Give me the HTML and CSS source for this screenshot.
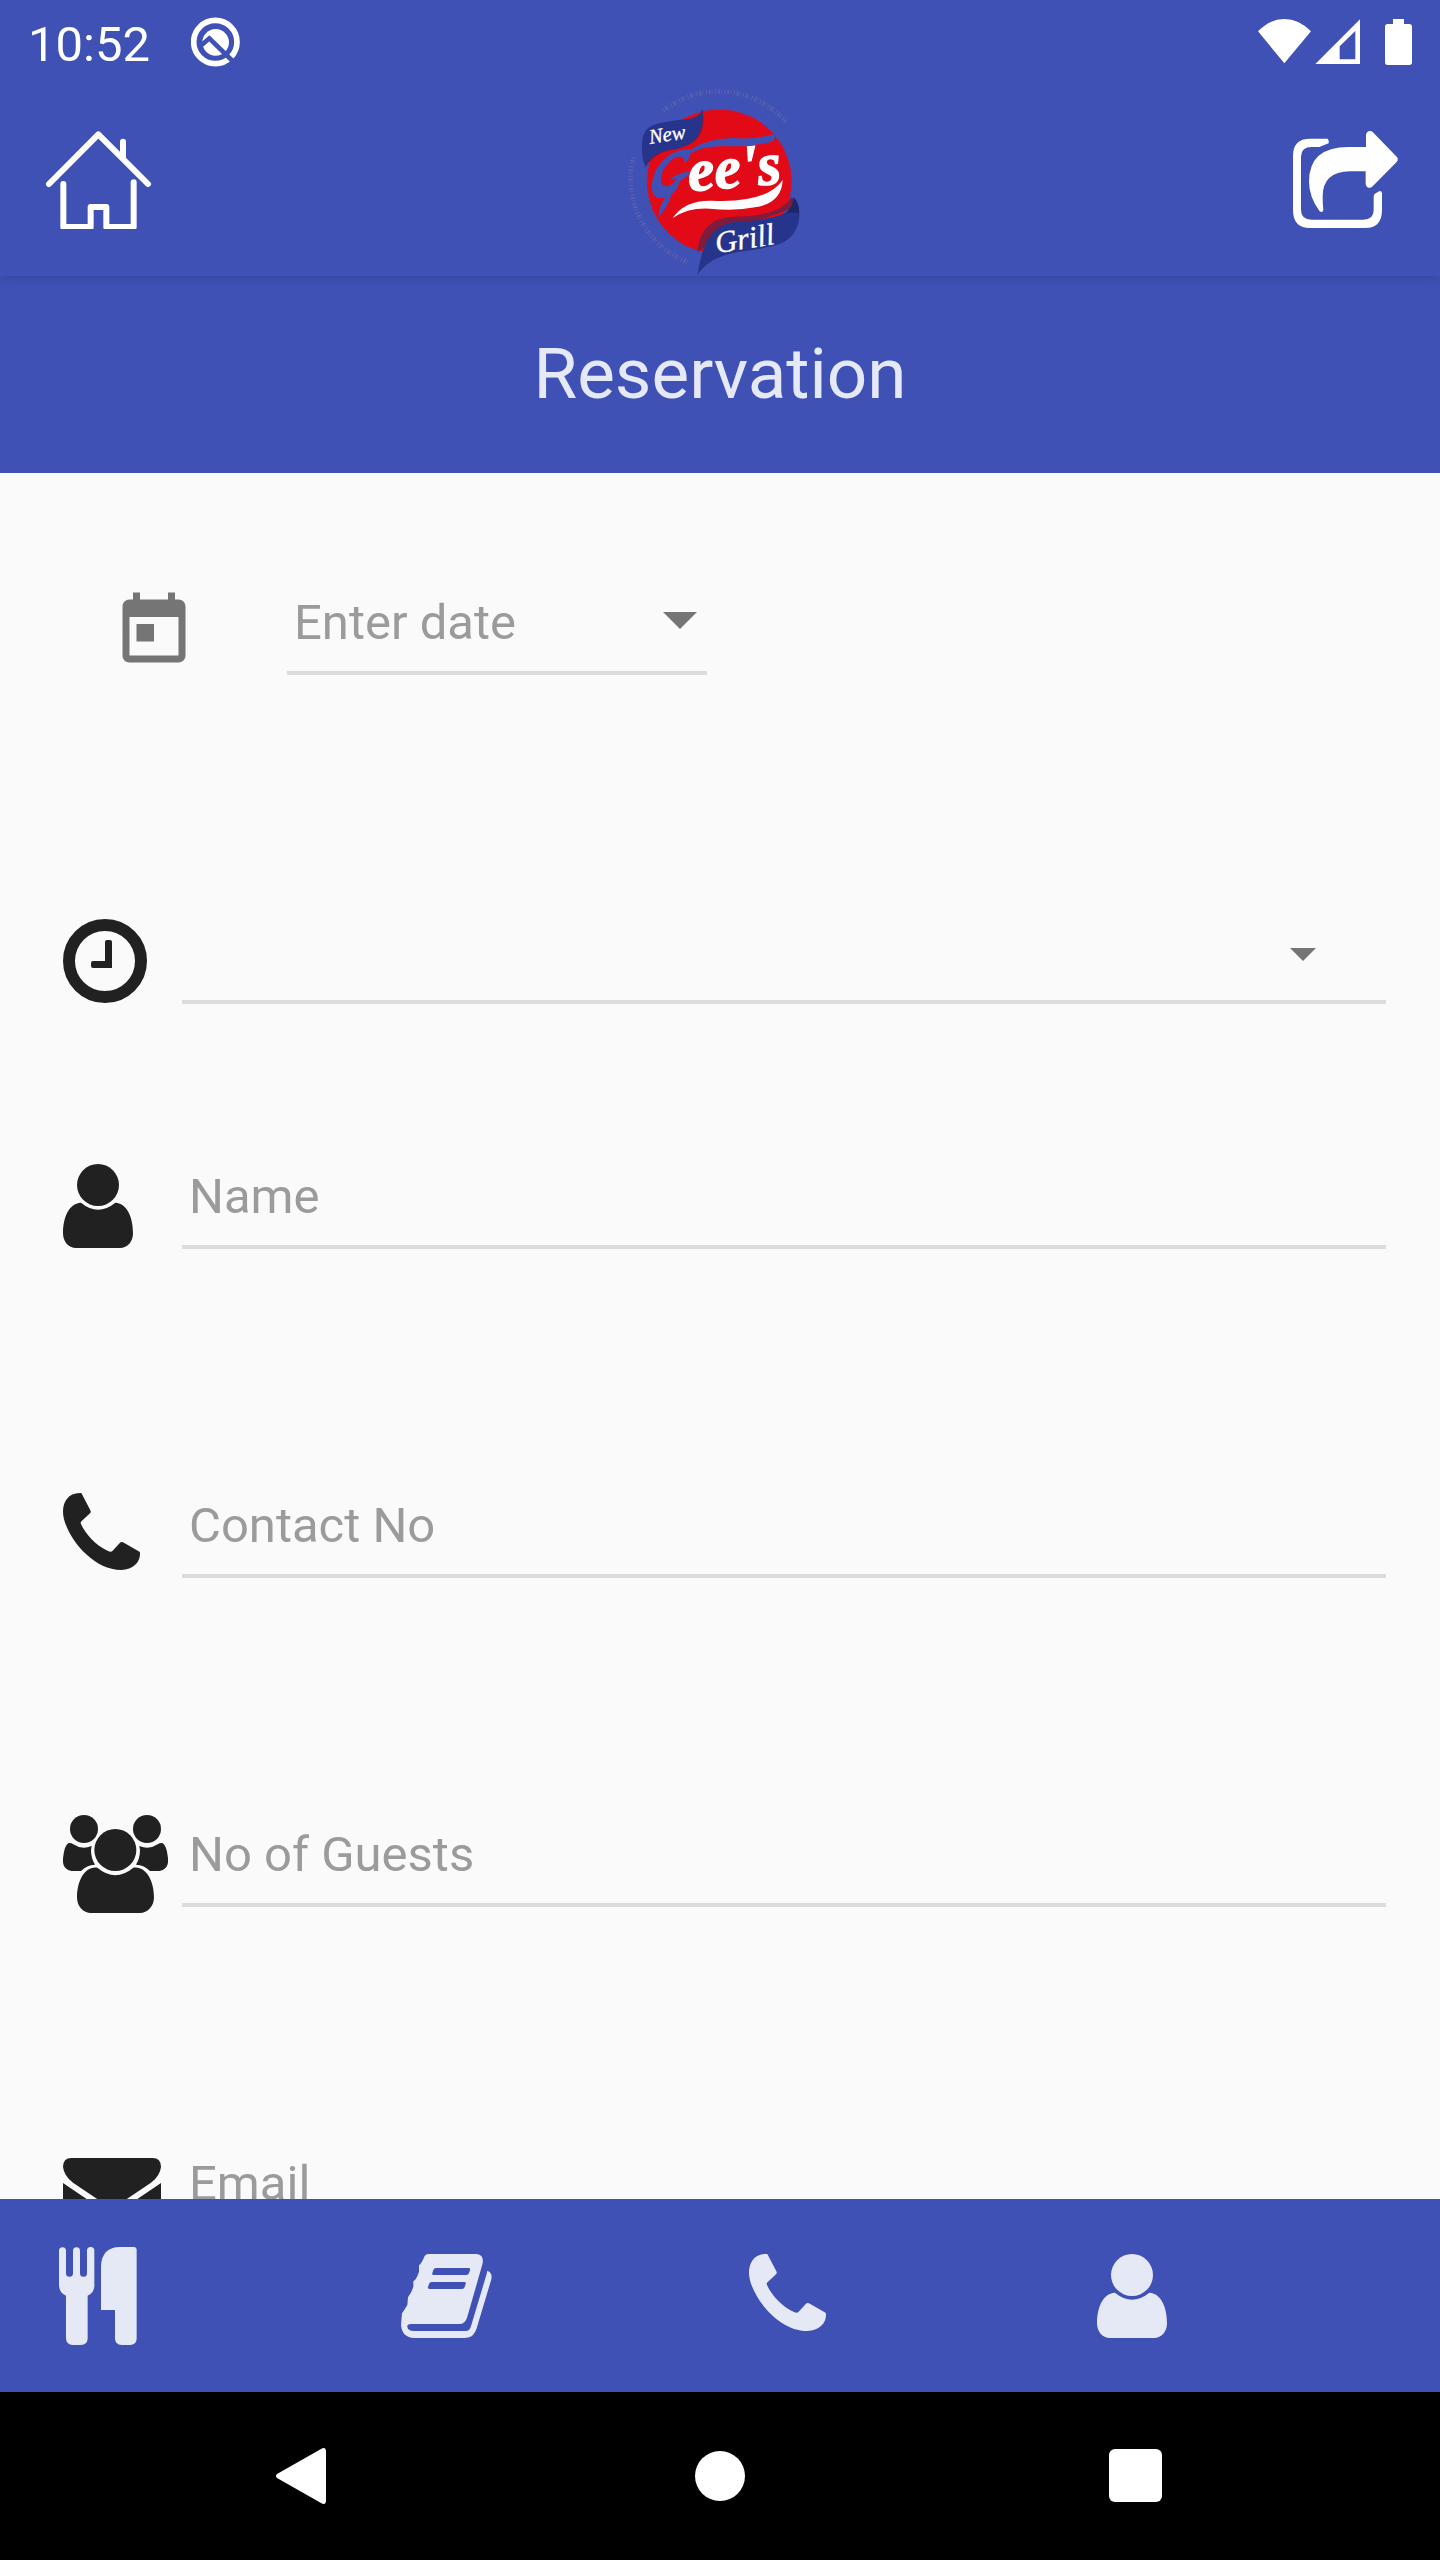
FILE: index.html
```html
<!DOCTYPE html>
<html lang="en">
<head>
  <meta charset="UTF-8">
  <meta name="viewport" content="width=device-width, initial-scale=1.0">
  <title>Reservation</title>
  <link rel="stylesheet" href="styles.css">
</head>
<body>
  <!-- icons used more than once -->
  <svg class="sprite" aria-hidden="true">
    <symbol id="icon-user" viewBox="69 801 336 294">
      <circle cx="174" cy="885" r="63"/>
      <path d="M123 938C85 940 69 985 69 1030C69 1055 85 1074 108 1074H240C263 1074 279 1055 279 1030C279 985 263 940 226 938Q174 980 123 938z"/>
    </symbol>
    <symbol id="icon-phone" viewBox="69 48 336 294">
      <path d="M122 69C85 68 69 95 69 125C69 185 150 300 244 300C280 300 302 275 300 248Q299 245 296 244L249 217Q244 214 240 218L218 242Q213 248 204 243C165 225 135 190 122 160Q121 156 126 152L150 130Q154 127 151 121L126 73Q125 69 122 69z"/>
    </symbol>
  </svg>

  <header class="app-header">
    <div class="status-bar">
      <span class="time">10:52</span>
      <svg class="status-app" viewBox="573 51 150 162" aria-hidden="true">
        <circle cx="646" cy="126" r="65" fill="none" stroke="#fff" stroke-width="17"/>
        <circle cx="647" cy="127" r="40" fill="#fff"/>
        <path d="M598 141L628 115L704 189" fill="none" stroke="#3f51b5" stroke-width="14"/>
      </svg>
      <svg class="status-icons" viewBox="168 51 468 162" aria-hidden="true">
        <path d="M174 94Q210 57 253 57Q297 57 333 94L253 190z"/>
        <path fill-rule="evenodd" d="M480 58V192H346zM466 93L419 139V178H466z"/>
        <path d="M579 57h33v15h16q8 0 8 8v107q0 8-8 8h-65q-8 0-8-8V80q0-8 8-8h16z"/>
      </svg>
    </div>
    <div class="toolbar">
      <button class="icon-btn" type="button" aria-label="Home">
        <svg class="icon line" viewBox="126 393 336 294">
          <path d="M147 552L295 403L444 552M369 425V475M190 552V681H272V621H319V681H401V547"/>
        </svg>
      </button>
      <svg class="logo" viewBox="75 42 570 576" role="img" aria-label="New Gee's Grill">
        <path class="logo-ring" d="M190 122A268 268 0 0 1 558 156M100 262A268 268 0 0 0 268 578"/>
        <circle cx="358" cy="335" r="215" fill="#e30a17"/>
        <circle cx="358" cy="335" r="215" fill="none" stroke="#e30a17" stroke-width="5" stroke-dasharray="7 5"/>
        <path fill="#7d1c3c" d="M308 122Q325 215 235 234Q165 244 135 294L150 250Q290 220 308 122zM292 545Q300 445 400 440Q540 440 575 380L590 410L420 470z"/>
        <path fill="#26348b" d="M308 116Q300 142 262 148Q200 152 158 166Q130 178 126 215Q123 265 137 292Q146 254 200 242Q270 232 292 200Q312 168 308 116z"/>
        <path fill="#26348b" d="M580 382Q600 400 598 440Q592 505 530 525Q480 538 420 545Q325 560 292 616Q300 560 320 515Q350 462 405 456Q490 452 545 434Q580 420 580 382z"/>
        <path fill="#1d2768" d="M580 382Q600 400 596 430Q575 425 556 430Q580 412 580 382z"/>
        <path fill="#3f51b5" d="M530 190L520 214Q455 232 375 228Q310 228 272 250Q268 270 254 278Q252 252 226 262Q188 285 183 325Q182 352 205 348Q222 342 230 325Q212 328 208 332Q220 312 272 303Q265 320 240 332Q232 360 215 372Q205 410 175 442Q176 410 196 382Q155 392 155 348Q160 290 205 258Q235 235 275 238Q320 206 395 204Q470 210 530 190z"/>
        <path fill="#fff" d="M218 444Q255 390 335 392Q500 400 548 330Q545 400 465 412Q405 424 330 416Q265 412 218 444z"/>
        <text class="logo-name" x="268" y="364" transform="rotate(-5 268 364)">ee's</text>
        <text class="logo-word" x="150" y="222" transform="rotate(-9 150 222)">New</text>
        <text class="logo-word big" x="350" y="550" transform="rotate(-9 350 550)">Grill</text>
      </svg>
      <button class="icon-btn" type="button" aria-label="Share">
        <svg class="icon" viewBox="258 393 336 294">
          <path d="M383 416Q388 422 386 430L358 441H335Q303 441 303 470V630Q303 659 335 659H490Q521 659 521 630V590Q521 583 527 580L539 573Q546 573 546 580V630Q546 684 495 684H330Q279 684 279 630V468Q279 416 330 416z"/>
          <path d="M498 441V405Q500 393 510 393Q515 393 518 396L590 470Q597 478 590 486L518 559Q512 565 505 563Q497 560 497 550V514H450Q368 515 368 590Q368 612 370 630Q368 640 359 634Q327 590 327 545Q327 441 445 441z"/>
        </svg>
      </button>
    </div>
  </header>

  <h1 class="page-title">Reservation</h1>

  <main class="content">
    <form class="form">
      <div class="row date-row">
        <label class="row-icon" for="date">
          <svg class="icon" viewBox="0 0 112 98" role="img" aria-label="Date">
            <path transform="translate(0 6) scale(3.5)" d="M19 3h-1V1h-2v2H8V1H6v2H5c-1.11 0-1.99.9-1.99 2L3 19c0 1.1.89 2 2 2h14c1.1 0 2-.9 2-2V5c0-1.1-.9-2-2-2zm0 16H5V8h14v11zM7 10h5v5H7z"/>
          </svg>
        </label>
        <div class="field date-field">
          <select id="date">
            <option>Enter date</option>
          </select>
        </div>
      </div>

      <div class="row time-row">
        <label class="row-icon" for="time">
          <svg class="icon" viewBox="69 66 336 294" role="img" aria-label="Time">
            <circle cx="195" cy="213" r="108" fill="none" stroke="currentColor" stroke-width="36"/>
            <path d="M201 150h9q6 0 6 6v78h-57q-6 0-6-6v-9q0-6 6-6h36v-57q0-6 6-6z"/>
          </svg>
        </label>
        <div class="field time-field">
          <select id="time">
            <option></option>
          </select>
        </div>
      </div>

      <div class="row">
        <label class="row-icon" for="name">
          <svg class="icon" role="img" aria-label="Name"><use href="#icon-user"/></svg>
        </label>
        <div class="field">
          <input type="text" id="name" placeholder="Name">
        </div>
      </div>

      <div class="row">
        <label class="row-icon" for="contact">
          <svg class="icon" role="img" aria-label="Contact No"><use href="#icon-phone"/></svg>
        </label>
        <div class="field">
          <input type="tel" id="contact" placeholder="Contact No">
        </div>
      </div>

      <div class="row">
        <label class="row-icon" for="guests">
          <svg class="icon" viewBox="69 75 336 294" role="img" aria-label="No of Guests">
            <circle cx="132" cy="117" r="42"/>
            <circle cx="321" cy="117" r="42"/>
            <circle cx="226" cy="180" r="63"/>
            <path id="guest-side" d="M86 159Q73 165 69 205V215C69 232 83 243 102 243H123Q140 225 165 224Q153 205 153 180L155 168Q125 180 100 163Q93 158 86 159z"/>
            <use href="#guest-side" transform="matrix(-1 0 0 1 453 0)"/>
            <path d="M172 233Q226 278 280 233C320 228 342 275 342 322C342 350 322 369 300 369H153C130 369 111 350 111 322C111 275 133 228 172 233z"/>
          </svg>
        </label>
        <div class="field">
          <input type="text" id="guests" placeholder="No of Guests">
        </div>
      </div>

      <div class="row">
        <label class="row-icon" for="email">
          <svg class="icon" viewBox="69 42 336 294" role="img" aria-label="Email">
            <path d="M94 84H338Q363 84 363 111Q360 138 333 158L250 214Q216 236 182 214L99 158Q72 138 69 111Q69 84 94 84z"/>
            <path d="M69 159L190 241Q216 256 242 241L363 159V290Q363 315 338 315H94Q69 315 69 290z"/>
          </svg>
        </label>
        <div class="field">
          <input type="email" id="email" placeholder="Email">
        </div>
      </div>
    </form>
  </main>

  <nav class="tab-bar">
    <button type="button" aria-label="Menu">
      <svg class="icon" viewBox="39 351 336 294">
        <path d="M57 362a10.500 10.500 0 0 1 21 0V430a10.500 10.500 0 0 0 21 0V362a10.500 10.500 0 0 1 21 0V430a10.500 10.500 0 0 0 21 0V362a11 11 0 0 1 22 0V465Q164 488 143 497V625Q143 645 122 645H99Q78 645 78 625V497Q57 488 57 465z"/>
        <path d="M240 351H281Q290 351 290 360V625Q290 645 270 645H245Q225 645 225 625V540H183V408Q186 351 240 351z"/>
      </svg>
    </button>
    <button type="button" aria-label="Reservation">
      <svg class="icon" viewBox="63 81 336 294">
        <path fill-rule="evenodd" d="M148 102H290Q312 104 308 130L262 290Q256 312 238 312H95Q81 312 82 320Q84 333 102 333H258Q268 333 272 322L319 165L322 152Q338 158 334 178L290 325Q282 354 255 354H102Q66 352 63 315L66 280Q72 272 82 255L84 232Q96 215 100 200V184Q110 178 117 155V136Q125 130 134 108Q138 101 148 102zM168 144H266Q272 144 270 150L267 159Q265 165 259 165H161Q155 165 157 159L160 150Q162 144 168 144zM155 186H253Q259 186 257 192L254 201Q252 207 246 207H148Q142 207 144 201L147 192Q149 186 155 186z"/>
      </svg>
    </button>
    <button type="button" aria-label="Contact">
      <svg class="icon"><use href="#icon-phone"/></svg>
    </button>
    <button type="button" aria-label="Account">
      <svg class="icon"><use href="#icon-user"/></svg>
    </button>
  </nav>

  <div class="system-nav">
    <button type="button" aria-label="Back">
      <svg viewBox="0 0 60 60"><path d="M2 28Q0 30 2 32L46 57Q51 60 51 54V6Q51 0 46 3z"/></svg>
    </button>
    <button type="button" aria-label="Home screen">
      <svg viewBox="0 0 60 60"><circle cx="30" cy="30" r="25"/></svg>
    </button>
    <button type="button" aria-label="Recent apps">
      <svg viewBox="0 0 60 60"><rect x="4" y="3" width="53" height="53" rx="6"/></svg>
    </button>
  </div>
</body>
</html>
```
FILE: styles.css
```css
* {
  box-sizing: border-box;
}
body {
  margin: 0;
  height: 100vh;
  display: flex;
  flex-direction: column;
  background: #fafafa;
  font-family: Roboto, sans-serif;
  font-size: 49px;
}
button {
  padding: 0;
  border: none;
  background: none;
  color: inherit;
  cursor: pointer;
}
svg {
  display: block;
  fill: currentColor;
}
.sprite {
  position: absolute;
  width: 0;
  height: 0;
}
.icon {
  width: 112px;
  height: 98px;
}
.icon.line {
  fill: none;
  stroke: currentColor;
  stroke-width: 18;
  stroke-linecap: round;
  stroke-linejoin: round;
}

/* header */
.app-header {
  position: relative;
  z-index: 1;
  background: #3f51b5;
  color: #fff;
  box-shadow: 0 3px 10px rgba(0, 0, 0, 0.12);
}
.status-bar {
  display: flex;
  align-items: center;
  height: 84px;
  padding: 4px 28px 0;
}
.status-app {
  width: 50px;
  height: 54px;
  margin-left: 41px;
}
.status-icons {
  width: 156px;
  height: 54px;
  margin-left: auto;
}
.toolbar {
  display: flex;
  align-items: center;
  justify-content: space-between;
  height: 192px;
  padding: 0 42px;
}
.logo {
  width: 190px;
  height: 192px;
}
.logo-ring {
  fill: none;
  stroke: #5c62ac;
  stroke-width: 14;
  stroke-dasharray: 3 6 5 4 2 8;
}
.logo-name {
  fill: #fff;
  stroke: #fff;
  stroke-width: 4;
  font: italic bold 180px "Liberation Serif", serif;
}
.logo-word {
  fill: #fff;
  stroke: #fff;
  stroke-width: 1;
  font: italic 62px "Liberation Serif", serif;
}
.logo-word.big {
  font-size: 92px;
}

.page-title {
  margin: 0;
  padding: 57px 0 58px;
  background: #3f51b5;
  color: #e5e8f5;
  font-size: 71px;
  font-weight: 400;
  line-height: 82px;
  text-align: center;
}

/* form */
.content {
  flex: 1;
  min-height: 0;
  overflow-y: auto;
  scrollbar-width: none;
}
.form {
  padding: 110px 54px 110px 63px;
}
.row {
  display: flex;
  align-items: flex-start;
  gap: 7px;
  margin-bottom: 231px;
  color: #212121;
}
.time-row {
  margin-bottom: 147px;
}
.date-row {
  padding-left: 49px;
  gap: 63px;
  color: #757575;
}
.field {
  position: relative;
  flex: 1;
}
.date-field {
  flex: none;
  width: 420px;
}
.field input,
.field select {
  display: block;
  width: 100%;
  height: 92px;
  padding: 0 7px 9px;
  border: none;
  border-bottom: 4px solid #dcdcdc;
  border-radius: 0;
  background: transparent;
  color: #9b9b9b;
  font: inherit;
  appearance: none;
  outline: none;
}
.field input::placeholder {
  color: #9b9b9b;
  opacity: 1;
}
/* drop-down arrows */
.date-field::after,
.time-field::after {
  content: "";
  position: absolute;
  border-style: solid;
  border-color: #757575 transparent transparent;
  pointer-events: none;
}
.date-field::after {
  top: 29px;
  right: 10px;
  border-width: 17px 17px 0;
}
.time-field::after {
  top: 36px;
  right: 70px;
  border-width: 13px 13px 0;
}

/* bottom bars */
.tab-bar {
  display: flex;
  align-items: center;
  height: 193px;
  padding-left: 48px;
  background: #3f51b5;
  color: #e5e8f5;
}
.tab-bar button {
  flex: 1;
  padding-left: 5px;
}
.system-nav {
  display: flex;
  align-items: center;
  height: 168px;
  padding: 0 97px;
  background: #000;
  color: #fff;
}
.system-nav button {
  display: flex;
  flex: 1;
  justify-content: center;
}
.system-nav svg {
  width: 60px;
  height: 60px;
}
```
